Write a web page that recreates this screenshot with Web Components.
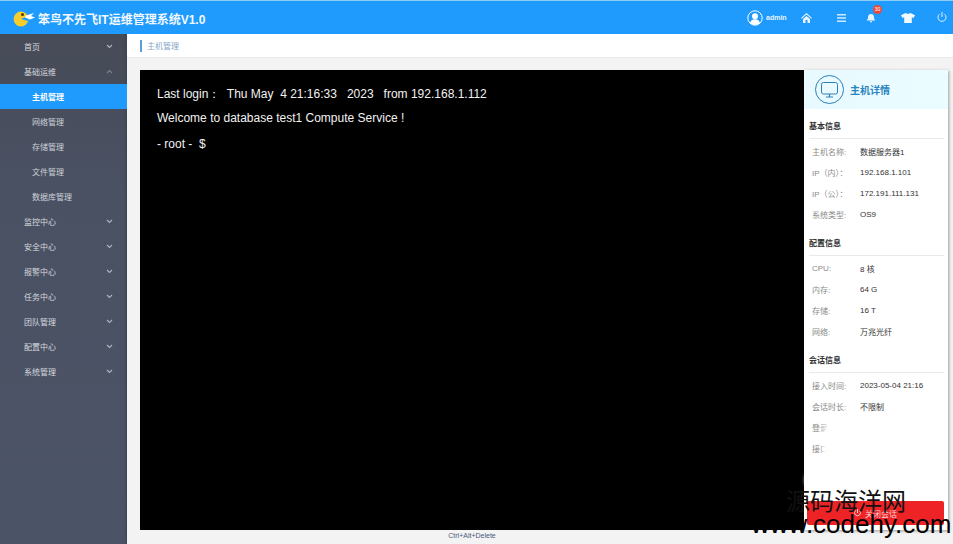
<!DOCTYPE html>
<html lang="zh"><head><meta charset="utf-8"><title>主机管理</title>
<style>
html,body{margin:0;padding:0;width:953px;height:544px;overflow:hidden;background:#f3f3f3;font-family:"Liberation Sans","Noto Sans CJK SC",sans-serif}
</style></head><body>
<app-shell>
  <app-header slot="header"></app-header>
  <app-sidebar slot="side">
    <nav-item has-chev>首页</nav-item>
    <nav-item has-chev open>基础运维</nav-item>
    <nav-item sub active>主机管理</nav-item>
    <nav-item sub>网络管理</nav-item>
    <nav-item sub>存储管理</nav-item>
    <nav-item sub>文件管理</nav-item>
    <nav-item sub>数据库管理</nav-item>
    <nav-item has-chev>监控中心</nav-item>
    <nav-item has-chev>安全中心</nav-item>
    <nav-item has-chev>报警中心</nav-item>
    <nav-item has-chev>任务中心</nav-item>
    <nav-item has-chev>团队管理</nav-item>
    <nav-item has-chev>配置中心</nav-item>
    <nav-item has-chev>系统管理</nav-item>
  </app-sidebar>
  <crumb-bar slot="crumb">主机管理</crumb-bar>
  <term-screen slot="term"></term-screen>
  <host-panel slot="panel">
    <info-section title="基本信息">
      <info-row label="主机名称:">数据服务器1</info-row>
      <info-row label="IP（内）：">192.168.1.101</info-row>
      <info-row label="IP（公）：">172.191.111.131</info-row>
      <info-row label="系统类型:">OS9</info-row>
    </info-section>
    <info-section title="配置信息">
      <info-row label="CPU:">8 核</info-row>
      <info-row label="内存:">64 G</info-row>
      <info-row label="存储:">16 T</info-row>
      <info-row label="网络:">万兆光纤</info-row>
    </info-section>
    <info-section title="会话信息">
      <info-row label="接入时间:">2023-05-04 21:16</info-row>
      <info-row label="会话时长:">不限制</info-row>
      <info-row label="登录">&nbsp;</info-row>
      <info-row label="接口">&nbsp;</info-row>
    </info-section>
  </host-panel>
  <span slot="keys">Ctrl+Alt+Delete</span>
  <water-mark slot="mark"></water-mark>
</app-shell>
<script>
function def(name, html, init){
  customElements.define(name, class extends HTMLElement{
    constructor(){super();this.attachShadow({mode:'open'}).innerHTML=html;}
    connectedCallback(){ if(init) init(this); }
  });
}
def('app-shell',`<style>
:host{display:grid;width:953px;height:544px;grid-template-columns:127px 1fr;grid-template-rows:34px 1fr;position:relative;overflow:hidden}
.h{grid-column:1/3}
.main{display:flex;flex-direction:column;min-width:0;background:#f3f3f3}
.work{display:flex;height:460px;margin:12px 5px 0 13px}
.keys{font:7px "Liberation Sans",sans-serif;color:#4a5a7a;text-align:center;margin-right:149px;margin-left:13px;line-height:10px;padding-top:1px}
.side{display:flex;min-height:0}
</style>
<div class="h"><slot name="header"></slot></div>
<div class="side"><slot name="side"></slot></div>
<div class="main">
<slot name="crumb"></slot>
<div class="work"><slot name="term"></slot><slot name="panel"></slot></div>
<div class="keys"><slot name="keys"></slot></div>
</div>
<slot name="mark"></slot>`);
def('app-header',`<style>
:host{display:flex;align-items:center;height:34px;box-sizing:border-box;background:#1f9bfd;border-top:1px solid #8fcbf7;color:#fff;padding-left:13px}
.logo{margin-top:2px}
.title{font:bold 12px/1 "Liberation Sans","Noto Sans CJK SC",sans-serif;margin-left:2px;white-space:nowrap;padding-top:4px;color:#f2f8ff}
.right{margin-left:auto;display:flex;align-items:center;height:100%;position:relative}
.user{display:flex;align-items:center;gap:3px;width:41px}
.admin{font:bold 7px "Liberation Sans",sans-serif;color:#e6f3ff}
.cell{display:flex;justify-content:center;align-items:center;position:relative}
.badge{position:absolute;left:15px;top:-8px;width:9px;height:9px;border-radius:50%;background:#e84a3c;color:#fff;font:5px/9px "Liberation Sans",sans-serif;text-align:center}
</style>
<svg class="logo" width="23" height="17" viewBox="0 0 23 17"><circle cx="8" cy="9" r="7.400" fill="#f6cd2d"/><path d="M8 9l7-3v5z" fill="#1f9bfd"/><circle cx="9.500" cy="4.500" r="1.500" fill="#4b3a10"/><path d="M13 5.500l8-2.500-3 3 4 1.500-5 2-5-2z" fill="#fff"/></svg>
<div class="title">笨鸟不先飞IT运维管理系统V1.0</div>
<div class="right">
  <div class="user"><svg width="16" height="16" viewBox="0 0 16 16" style="flex:none"><circle cx="8" cy="8" r="7.200" fill="none" stroke="#fff"/><circle cx="8" cy="6.200" r="3" fill="#fff"/><path d="M3 13c.7-2.800 2.800-3.800 5-3.800s4.300 1 5 3.800a7 7 0 0 1-10 0z" fill="#fff"/></svg><span class="admin">admin</span></div>
  <div class="cell" style="width:36px"><svg width="11" height="10" viewBox="0 0 11 10" fill="#e8f5ff"><path d="M5.500 0L0 5l.7.8L5.500 1.500l4.800 4.300L11 5z"/><path d="M2 6l3.500-3.100L9 6v4H6.500V7h-2v3H2z"/></svg></div>
  <div class="cell" style="width:34px"><svg width="9" height="8" viewBox="0 0 9 8" fill="#cfe9fd"><rect width="9" height="1.500"/><rect y="3.200" width="9" height="1.500"/><rect y="6.500" width="9" height="1.500"/></svg></div>
  <div class="cell" style="width:26px"><svg width="10" height="10" viewBox="0 0 10 10" fill="#e8f5ff"><path d="M5 1c2 0 3 1.500 3 3.500 0 1.500.6 2.300 1.500 3h-9C1.400 6.800 2 6 2 4.500 2 2.500 3 1 5 1z"/><path d="M3.800 8.300h2.400a1.200 1.200 0 0 1-2.400 0z"/></svg><span class="badge">30</span></div>
  <div class="cell" style="width:48px"><svg width="14" height="10" viewBox="0 0 14 10" fill="#f2f9ff"><path d="M4.500 0C5.500 1 8.500 1 9.500 0L14 2.200 12.500 5 10.800 4.300V10H3.200V4.300L1.500 5 0 2.200z"/></svg></div>
  <div class="cell" style="width:20px;margin-right:1px"><svg width="10" height="11" viewBox="0 0 10 11" fill="none" stroke="#dff0fe" stroke-width="1"><path d="M5 0v5"/><path d="M2.500 2.200a4 4 0 1 0 5 0"/></svg></div>
</div>`);
def('app-sidebar',`<style>
:host{display:block;width:127px;box-sizing:border-box;background:linear-gradient(#474b57,#4a5163 30%,#4b5366);border-right:1px solid #3f4553;box-shadow:inset -2px 0 2px rgba(0,0,0,.05)}
</style><slot></slot>`);
def('nav-item',`<style>
:host{display:flex;align-items:center;height:25px;box-sizing:border-box;padding:0 13px 1px 24px;color:#d6d9df;font:8px "Liberation Sans","Noto Sans CJK SC",sans-serif}
:host([sub]){padding-left:32px;color:#cdd1d8}
:host([active]){background:#1f9bfd;color:#fff;font-weight:bold;width:127px}
svg{margin-left:auto}
:host(:not([has-chev])) svg{display:none}
:host([open]) svg{transform:rotate(180deg);opacity:.5}
</style><slot></slot><svg width="7" height="5" viewBox="0 0 7 5" fill="none" stroke="#aeb4bf" stroke-width="1.100"><path d="M1 1l2.500 2.500L6 1"/></svg>`);
def('crumb-bar',`<style>
:host{display:flex;align-items:center;height:24px;box-sizing:border-box;background:#fff;border-bottom:1px solid #e9e9e9;padding-left:13px;font:8px "Liberation Sans","Noto Sans CJK SC",sans-serif;color:#86a6c8}
i{display:block;width:2px;height:12px;background:#5a9fd8;margin-right:5px}
</style><i></i><slot></slot>`);
def('term-screen',`<style>
:host{display:block;flex:1;min-width:0;background:#000;color:#f2f2f2;padding:16px 17px;box-sizing:border-box;font:12px "Liberation Sans",sans-serif}
div{white-space:pre;height:24px;line-height:17px}
div.r{margin-top:2px}
</style><div>Last login：  Thu May  4 21:16:33   2023   from 192.168.1.112</div><div>Welcome to database test1 Compute Service !</div><div class="r">- root -  $</div>`);
def('host-panel',`<style>
:host{display:flex;flex-direction:column;width:144px;flex:none;background:#fff;box-shadow:1px 1px 3px rgba(0,0,0,.35);position:relative;font:8px "Liberation Sans","Noto Sans CJK SC",sans-serif}
.head{display:flex;align-items:center;height:39px;background:linear-gradient(90deg,#e8faff,#eafcff);padding-left:11px;gap:6px;color:#2a84c0;font-weight:bold;font-size:10px}
.body{padding:8px 4px 0 5px}
.btn{position:absolute;left:3px;right:4px;bottom:5px;height:24px;background:#ee2326;border-radius:2px;color:#f7cfcf;font-size:8px;display:flex;align-items:center;justify-content:center;gap:4px}
</style>
<div class="head"><svg width="29" height="29" viewBox="0 0 29 29" fill="none" stroke="#2a80b8"><circle cx="14.500" cy="14.500" r="14"/><rect x="6.500" y="7.500" width="16" height="11.500" rx="2"/><path d="M11 22h7M14.500 19v3" stroke-width="1.200"/></svg><span>主机详情</span></div>
<div class="body"><slot></slot></div>
<div class="btn"><svg width="7" height="8" viewBox="0 0 7 8" fill="none" stroke="#f7cfcf"><path d="M3.500 0v4M1.500 1.500a3 3 0 1 0 4 0"/></svg><span>关闭会话</span></div>`);
def('info-section',`<style>
:host{display:block;height:117px}
.t{height:21px;line-height:20px;font-weight:bold;color:#333;border-bottom:1px solid #e9e9e9;margin-bottom:2px;font-size:8px}
</style><div class="t"></div><slot></slot>`,(el)=>{el.shadowRoot.querySelector('.t').textContent=el.getAttribute('title');});
def('info-row',`<style>
:host{display:flex;height:21px;align-items:center;font-size:8px;padding-left:3px;color:#333}
.l{width:48px;color:#8a8a8a;flex:none}
</style><span class="l"></span><slot></slot>`,(el)=>{el.shadowRoot.querySelector('.l').textContent=el.getAttribute('label');});
def('water-mark',`<style>
:host{display:block;position:absolute;inset:0;pointer-events:none;overflow:hidden}
.blob{position:absolute;background:#fff;filter:blur(2px)}
.a{left:823px;top:420px;width:88px;height:50px;border-radius:12px}
.b{left:805px;top:462px;width:92px;height:36px;border-radius:50%}
.cn{position:absolute;left:786px;top:486px;font:24px/28px "Noto Sans CJK SC",sans-serif;color:#111;white-space:nowrap}
.en{position:absolute;left:751px;top:508px;font:26px/32px "Liberation Sans",sans-serif;color:#000;white-space:nowrap}
</style><div class="blob a"></div><div class="blob b"></div><div class="cn">源码海洋网</div><div class="en">www.codehy.com</div>`);
</script>
</body></html>
